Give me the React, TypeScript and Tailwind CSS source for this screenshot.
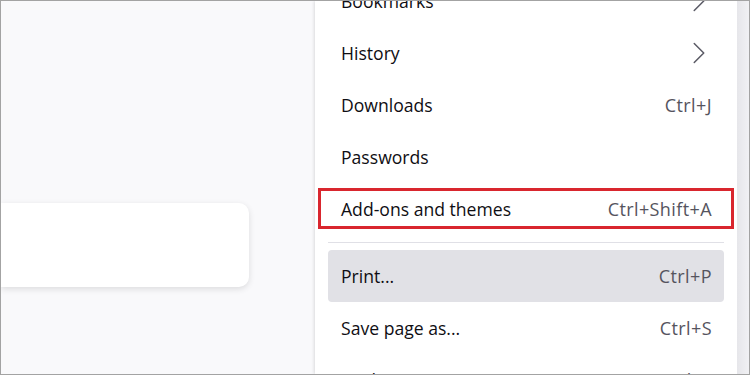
import { ChevronRight } from "lucide-react";

type Item = { label: string; shortcut?: string; arrow?: boolean; active?: boolean; marked?: boolean };

const topItems: Item[] = [
  { label: "Bookmarks", arrow: true },
  { label: "History", arrow: true },
  { label: "Downloads", shortcut: "Ctrl+J" },
  { label: "Passwords" },
  { label: "Add-ons and themes", shortcut: "Ctrl+Shift+A", marked: true },
];

const bottomItems: Item[] = [
  { label: "Print...", shortcut: "Ctrl+P", active: true },
  { label: "Save page as...", shortcut: "Ctrl+S" },
  { label: "Find in page...", shortcut: "Ctrl+F" },
];

function Row({ item }: { item: Item }) {
  return (
    <div
      className={`relative flex h-[52px] shrink-0 items-center justify-between rounded-[4px] pl-[13px] pr-[12px] ${
        item.active ? "bg-[#e1e1e6]" : ""
      }`}
    >
      <span className="text-[17.6px] text-[#0f0e13]">{item.label}</span>
      {item.shortcut && (
        <span className="text-[18px] tracking-[0.4px] text-[#55545e]">{item.shortcut}</span>
      )}
      {item.arrow && <ChevronRight size={38} strokeWidth={0.95} className="-mr-[6px] text-[#5b5b66]" />}
      {item.marked && (
        <div className="pointer-events-none absolute -left-[10px] -right-[10px] top-[5px] bottom-[6px] border-[3px] border-[#d9262e]" />
      )}
    </div>
  );
}

export default function App() {
  return (
    <div
      className="flex h-[375px] w-[750px] overflow-hidden border border-[#a3a3a3] bg-[#f9f9fb]"
      style={{ fontFamily: "'Open Sans', 'Noto Sans', sans-serif" }}
    >
      <div className="flex-1 pt-[202px] pr-[66px]">
        <div className="h-[84px] w-full rounded-r-[10px] bg-white shadow-[0_2px_6px_rgba(0,0,0,0.12)]" />
      </div>

      <div className="flex w-[422px] shrink-0 flex-col bg-white px-[13px] shadow-[-1px_0_3px_rgba(0,0,0,0.12)]">
        <div className="-mt-[26px] flex flex-col">
          {topItems.map((it) => (
            <Row key={it.label} item={it} />
          ))}
        </div>
        <div className="my-[7px] h-px shrink-0 bg-[#e0e0e6]" />
        {bottomItems.map((it) => (
          <Row key={it.label} item={it} />
        ))}
      </div>

      <div className="w-[12px] shrink-0 bg-gradient-to-r from-[#e6e6ea] to-[#f1f1f4]" />
    </div>
  );
}
